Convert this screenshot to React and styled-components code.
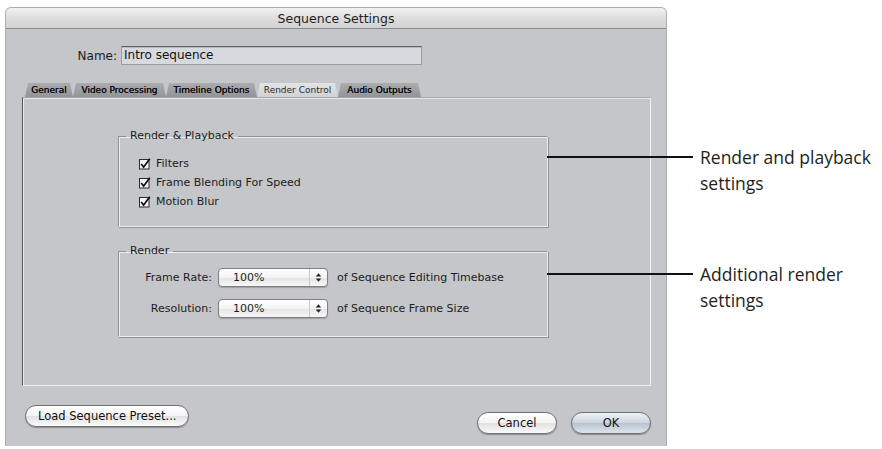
import { Fragment } from "react";
import styled, { createGlobalStyle } from "styled-components";

const GlobalStyle = createGlobalStyle`
  *, *::before, *::after {
    box-sizing: border-box;
  }
  html, body {
    margin: 0;
    padding: 0;
    background: #ffffff;
  }
  body {
    font-family: "DejaVu Sans", "Liberation Sans", sans-serif;
    color: #1c1c1c;
  }
`;

const Page = styled.div`
  display: flex;
  align-items: flex-start;
  padding: 7px 0 0 5px;
`;

const Window = styled.div`
  width: 662px;
  height: 439px;
  display: flex;
  flex-direction: column;
  background: #c4c6c9;
  border: 1px solid #a9abad;
  border-bottom: none;
  border-radius: 6px 6px 0 0;
  overflow: hidden;
`;

const TitleBar = styled.div`
  height: 21px;
  flex: none;
  display: flex;
  align-items: center;
  justify-content: center;
  background: linear-gradient(#f1f1f1, #dcdcdc 55%, #d2d2d2);
  border-bottom: 1px solid #8b8b8b;
  font-size: 12.5px;
  color: #1e1e1e;
`;

const Body = styled.div`
  flex: 1;
  display: flex;
  flex-direction: column;
  padding: 17px 15px 0 16px;
`;

const NameRow = styled.div`
  display: flex;
  align-items: center;
  gap: 4px;
  font-size: 12px;
`;

const NameLabel = styled.label`
  width: 95px;
  text-align: right;
`;

const NameInput = styled.div`
  width: 301px;
  height: 19px;
  line-height: 17px;
  padding-left: 2px;
  background: #d6d9de;
  border: 1px solid #9a9da1;
  border-top-color: #5f6164;
  box-shadow: inset 0 1px 0 #b4b7bb;
  font-size: 12px;
  color: #111;
`;

const TabStrip = styled.div`
  display: flex;
  margin: 18px 0 0 3px;
  height: 14px;
`;

const Tab = styled.div`
  width: ${(p) => p.$w}px;
  height: 14px;
  line-height: 14px;
  text-align: center;
  font-size: 9px;
  color: ${(p) => (p.$active ? "#2a2a2a" : "#101010")};
  background: ${(p) =>
    p.$active
      ? "linear-gradient(#e2e4e6, #cfd1d4)"
      : "linear-gradient(#aaacaf, #929498)"};
  clip-path: polygon(0 100%, 3px 0, calc(100% - 3px) 0, 100% 100%);
  white-space: nowrap;
  text-shadow: ${(p) => (p.$active ? "none" : "0 0 0.4px #000")};
`;

const Panel = styled.div`
  height: 289px;
  flex: none;
  border: 1px solid #a4a6a9;
  border-left-color: #55575a;
  border-right-color: #eef0f1;
  border-bottom-color: #eef0f1;
  box-shadow: inset 1px 1px 0 #e6e8ea;
  padding: 31px 0 0 95px;
  display: flex;
  flex-direction: column;
  gap: 17px;
`;

const Group = styled.fieldset`
  width: 430px;
  margin: 0;
  padding: 0;
  border: 1px solid #eceef0;
  border-top-color: #8e9093;
  border-left-color: #8e9093;
  box-shadow: inset 1px 1px 0 #eceef0, 1px 1px 0 #8e9093;
  min-inline-size: 0;
`;

const Legend = styled.legend`
  margin-left: 7px;
  padding: 0 4px;
  font-size: 11px;
  line-height: 14px;
`;

const CheckList = styled.div`
  display: flex;
  flex-direction: column;
  padding: 11px 0 15px 20px;
`;

const CheckRow = styled.label`
  display: flex;
  align-items: center;
  gap: 5px;
  height: 19px;
  font-size: 11px;
`;

const FormGrid = styled.div`
  display: grid;
  grid-template-columns: 93px 110px auto;
  column-gap: 6px;
  row-gap: 12px;
  align-items: center;
  padding: 10px 0 18px 0;
  font-size: 11px;
`;

const FieldLabel = styled.span`
  text-align: right;
`;

const FieldNote = styled.span`
  margin-left: 3px;
`;

const Popup = styled.div`
  height: 19px;
  display: flex;
  align-items: center;
  border: 1px solid #7d7f82;
  border-radius: 4px;
  background: linear-gradient(#ffffff, #f3f3f3 50%, #e4e4e4 51%, #f7f7f7);
  box-shadow: 0 1px 1px rgba(0, 0, 0, 0.2);
`;

const PopupValue = styled.span`
  flex: 1;
  padding-left: 14px;
`;

const PopupArrows = styled.span`
  width: 18px;
  height: 100%;
  display: flex;
  align-items: center;
  justify-content: center;
  border-left: 1px solid #c9c9c9;
`;

const Footer = styled.div`
  display: flex;
  justify-content: space-between;
  align-items: flex-start;
  margin: 19px 0 0 3px;
`;

const ButtonGroup = styled.div`
  display: flex;
  gap: 14px;
  margin-top: 7px;
  align-items: center;
`;

const PillButton = styled.button`
  height: 22px;
  min-width: ${(p) => p.$min || 0}px;
  padding: 0 12px;
  border: 1px solid #6f7174;
  border-radius: 11px;
  font-family: "DejaVu Sans", "Liberation Sans", sans-serif;
  font-size: 11.5px;
  color: #111;
  background: ${(p) =>
    p.$default
      ? "linear-gradient(#eef2f6, #cdd6df 48%, #b8c4cf 52%, #dde5ec)"
      : "linear-gradient(#ffffff, #f4f4f4 48%, #e2e2e2 52%, #fafafa)"};
  box-shadow: 0 1px 1px rgba(0, 0, 0, 0.3);
`;

const Notes = styled.div`
  display: flex;
  flex-direction: column;
  gap: 65px;
  margin-left: 33px;
  padding-top: 137px;
`;

const Note = styled.div`
  position: relative;
  font-family: "Open Sans", "Noto Sans", sans-serif;
  font-size: 17.5px;
  line-height: 26px;
  color: #231f20;

  &::before {
    content: "";
    position: absolute;
    left: -153px;
    top: 12px;
    width: 146px;
    height: 1.5px;
    background: #111;
  }
`;

function CheckIcon() {
  return (
    <svg width="12" height="12" viewBox="0 0 12 12">
      <rect x="0.5" y="1.5" width="9.5" height="9.5" fill="#f4f4f4" stroke="#2b2b2b" />
      <path d="M2.2 6 L4.6 9 L10.8 0.8" fill="none" stroke="#111" strokeWidth="1.7" />
    </svg>
  );
}

function StepperIcon() {
  return (
    <svg width="7" height="11" viewBox="0 0 7 11">
      <path d="M0.8 4.4 L3.5 1.2 L6.2 4.4 Z" fill="#222" />
      <path d="M0.8 6.6 L3.5 9.8 L6.2 6.6 Z" fill="#222" />
    </svg>
  );
}

const tabs = [
  { label: "General", w: 48 },
  { label: "Video Processing", w: 93 },
  { label: "Timeline Options", w: 91 },
  { label: "Render Control", w: 81, active: true },
  { label: "Audio Outputs", w: 83 },
];

const checks = ["Filters", "Frame Blending For Speed", "Motion Blur"];

const fields = [
  { label: "Frame Rate:", value: "100%", note: "of Sequence Editing Timebase" },
  { label: "Resolution:", value: "100%", note: "of Sequence Frame Size" },
];

export default function App() {
  return (
    <>
      <GlobalStyle />
      <Page>
        <Window>
          <TitleBar>Sequence Settings</TitleBar>
          <Body>
            <NameRow>
              <NameLabel>Name:</NameLabel>
              <NameInput>Intro sequence</NameInput>
            </NameRow>
            <TabStrip>
              {tabs.map((t) => (
                <Tab key={t.label} $active={t.active} $w={t.w}>
                  {t.label}
                </Tab>
              ))}
            </TabStrip>
            <Panel>
              <Group>
                <Legend>Render &amp; Playback</Legend>
                <CheckList>
                  {checks.map((c) => (
                    <CheckRow key={c}>
                      <CheckIcon />
                      {c}
                    </CheckRow>
                  ))}
                </CheckList>
              </Group>
              <Group>
                <Legend>Render</Legend>
                <FormGrid>
                  {fields.map((f) => (
                    <Fragment key={f.label}>
                      <FieldLabel>{f.label}</FieldLabel>
                      <Popup>
                        <PopupValue>{f.value}</PopupValue>
                        <PopupArrows>
                          <StepperIcon />
                        </PopupArrows>
                      </Popup>
                      <FieldNote>{f.note}</FieldNote>
                    </Fragment>
                  ))}
                </FormGrid>
              </Group>
            </Panel>
            <Footer>
              <PillButton>Load Sequence Preset...</PillButton>
              <ButtonGroup>
                <PillButton $min={80}>Cancel</PillButton>
                <PillButton $min={80} $default>
                  OK
                </PillButton>
              </ButtonGroup>
            </Footer>
          </Body>
        </Window>
        <Notes>
          <Note>
            Render and playback
            <br />
            settings
          </Note>
          <Note>
            Additional render
            <br />
            settings
          </Note>
        </Notes>
      </Page>
    </>
  );
}
